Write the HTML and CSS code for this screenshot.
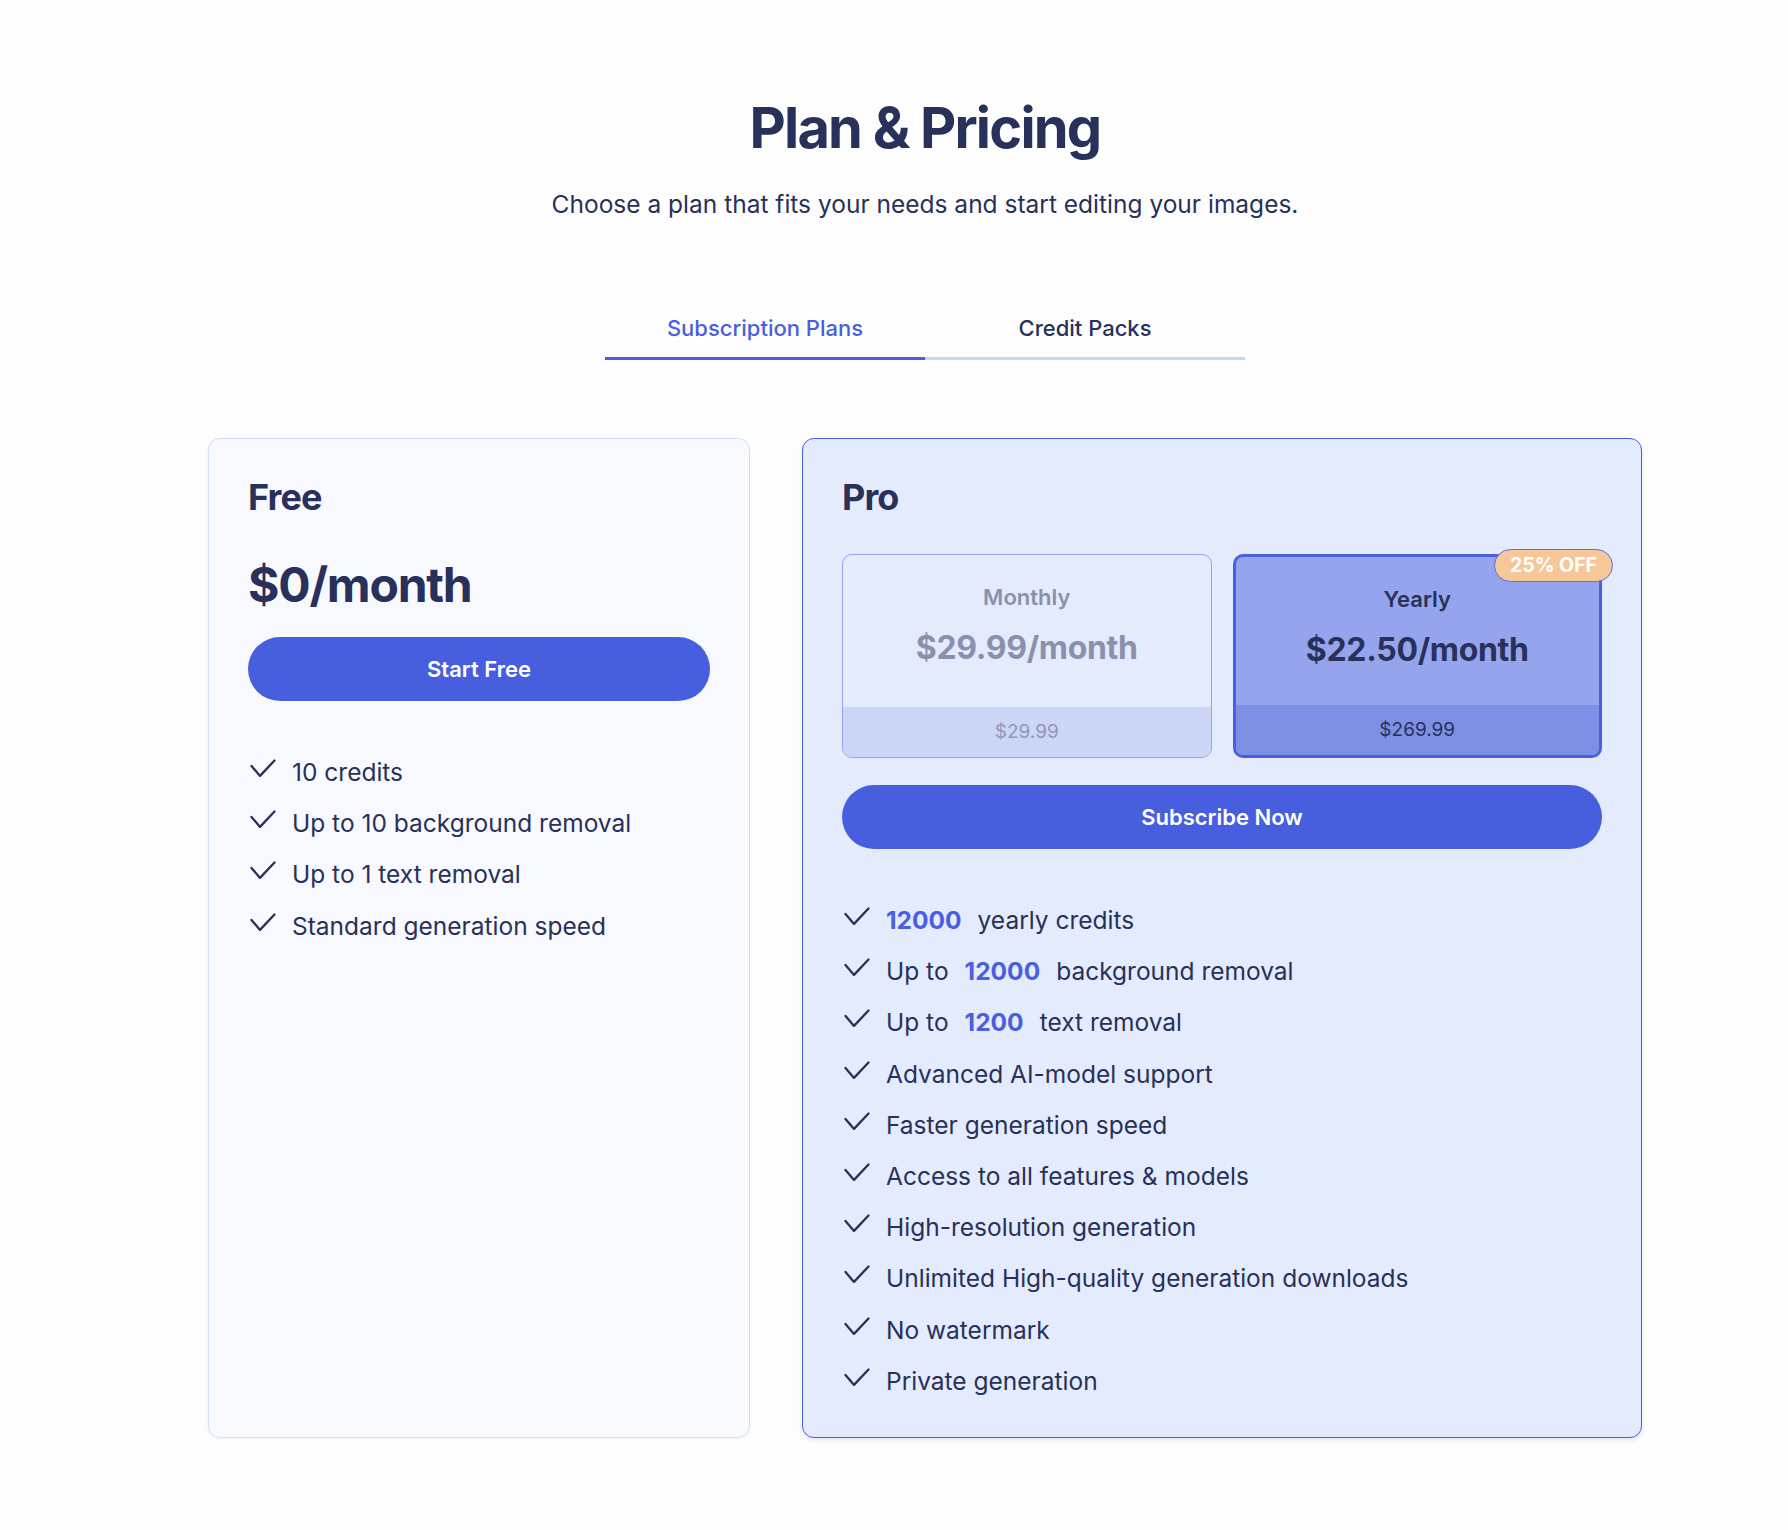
FILE: index.html
```html
<!DOCTYPE html>
<html lang="en">
<head>
<meta charset="utf-8">
<title>Plan &amp; Pricing</title>
<link rel="stylesheet" href="styles.css">
</head>
<body>
<main class="page">
  <h1 class="title">Plan &amp; Pricing</h1>
  <p class="subtitle">Choose a plan that fits your needs and start editing your images.</p>

  <div class="tabs">
    <button class="tab tab-active">Subscription Plans</button>
    <button class="tab">Credit Packs</button>
  </div>

  <div class="plans">
    <section class="card card-free">
      <h2 class="plan-name">Free</h2>
      <div class="plan-price">$0/month</div>
      <button class="cta">Start Free</button>
      <ul class="features">
        <li><svg class="check" viewBox="0 0 26 20"><polyline points="1.5 6.9 10 16.9 24.5 1.5"/></svg><span>10 credits</span></li>
        <li><svg class="check" viewBox="0 0 26 20"><polyline points="1.5 6.9 10 16.9 24.5 1.5"/></svg><span>Up to 10 background removal</span></li>
        <li><svg class="check" viewBox="0 0 26 20"><polyline points="1.5 6.9 10 16.9 24.5 1.5"/></svg><span>Up to 1 text removal</span></li>
        <li><svg class="check" viewBox="0 0 26 20"><polyline points="1.5 6.9 10 16.9 24.5 1.5"/></svg><span>Standard generation speed</span></li>
      </ul>
    </section>

    <section class="card card-pro">
      <h2 class="plan-name">Pro</h2>
      <div class="billing">
        <div class="option">
          <div class="option-main">
            <div class="option-label">Monthly</div>
            <div class="option-price">$29.99/month</div>
          </div>
          <div class="option-total">$29.99</div>
        </div>
        <div class="option option-selected">
          <span class="badge">25% OFF</span>
          <div class="option-main">
            <div class="option-label">Yearly</div>
            <div class="option-price">$22.50/month</div>
          </div>
          <div class="option-total">$269.99</div>
        </div>
      </div>
      <button class="cta">Subscribe Now</button>
      <ul class="features">
        <li><svg class="check" viewBox="0 0 26 20"><polyline points="1.5 6.9 10 16.9 24.5 1.5"/></svg><span class="hl">12000</span><span>yearly credits</span></li>
        <li><svg class="check" viewBox="0 0 26 20"><polyline points="1.5 6.9 10 16.9 24.5 1.5"/></svg><span>Up to</span><span class="hl">12000</span><span>background removal</span></li>
        <li><svg class="check" viewBox="0 0 26 20"><polyline points="1.5 6.9 10 16.9 24.5 1.5"/></svg><span>Up to</span><span class="hl">1200</span><span>text removal</span></li>
        <li><svg class="check" viewBox="0 0 26 20"><polyline points="1.5 6.9 10 16.9 24.5 1.5"/></svg><span>Advanced AI-model support</span></li>
        <li><svg class="check" viewBox="0 0 26 20"><polyline points="1.5 6.9 10 16.9 24.5 1.5"/></svg><span>Faster generation speed</span></li>
        <li><svg class="check" viewBox="0 0 26 20"><polyline points="1.5 6.9 10 16.9 24.5 1.5"/></svg><span>Access to all features &amp; models</span></li>
        <li><svg class="check" viewBox="0 0 26 20"><polyline points="1.5 6.9 10 16.9 24.5 1.5"/></svg><span>High-resolution generation</span></li>
        <li><svg class="check" viewBox="0 0 26 20"><polyline points="1.5 6.9 10 16.9 24.5 1.5"/></svg><span>Unlimited High-quality generation downloads</span></li>
        <li><svg class="check" viewBox="0 0 26 20"><polyline points="1.5 6.9 10 16.9 24.5 1.5"/></svg><span>No watermark</span></li>
        <li><svg class="check" viewBox="0 0 26 20"><polyline points="1.5 6.9 10 16.9 24.5 1.5"/></svg><span>Private generation</span></li>
      </ul>
    </section>
  </div>
</main>
</body>
</html>
```

FILE: styles.css
```css
* {
  box-sizing: border-box;
}

html, body {
  margin: 0;
  padding: 0;
  background: #fdfdfe;
}

body {
  font-family: Inter, "Noto Sans", "Liberation Sans", sans-serif;
  color: #283159;
}

.page {
  padding: 94px 0 90px 62px;
  display: flex;
  flex-direction: column;
  align-items: center;
}

.title {
  margin: 0;
  font-size: 56px;
  line-height: 68px;
  font-weight: 700;
  letter-spacing: -0.032em;
  color: #283159;
}

.subtitle {
  margin: 26px 0 0;
  font-size: 24.5px;
  line-height: 32px;
  font-weight: 400;
  color: #283159;
}

.tabs {
  margin-top: 93px;
  display: flex;
  width: 640px;
}

.tab {
  flex: 1;
  font-family: inherit;
  background: none;
  border: 0;
  border-bottom: 3px solid #c6d6f7;
  padding: 0 0 14px;
  font-size: 22px;
  line-height: 30px;
  font-weight: 500;
  color: #283159;
  cursor: pointer;
}

.tab-active {
  color: #4a5fe0;
  border-bottom-color: #4a5ee0;
}

.plans {
  margin-top: 78px;
  display: grid;
  grid-template-columns: 542px 840px;
  column-gap: 52px;
}

.card {
  border-radius: 12px;
  padding: 36px 39px 40px;
  display: flex;
  flex-direction: column;
}

.card-free {
  background: #f7f9fe;
  border: 1px solid #d3dffa;
  box-shadow: 0 1px 3px rgba(40, 49, 89, 0.05);
}

.card-pro {
  background: #e4ebfd;
  border: 1px solid #4a5fe0;
  box-shadow: 0 2px 4px rgba(40, 49, 89, 0.12);
}

.plan-name {
  margin: 0;
  font-size: 36px;
  line-height: 44px;
  font-weight: 700;
  letter-spacing: -0.025em;
  color: #283159;
}

.plan-price {
  margin-top: 36.5px;
  font-size: 48px;
  line-height: 58px;
  font-weight: 700;
  letter-spacing: -0.025em;
  color: #283159;
}

.cta {
  width: 100%;
  height: 64px;
  border: 0;
  border-radius: 32px;
  background: #475ede;
  color: #ffffff;
  font-family: inherit;
  font-size: 22px;
  font-weight: 600;
  cursor: pointer;
}

.card-free .cta {
  margin-top: 23.5px;
}

.card-pro .cta {
  margin-top: 27px;
}

.features {
  list-style: none;
  margin: 55px 0 0;
  padding: 0;
  display: flex;
  flex-direction: column;
  gap: 19.2px;
}

.features li {
  display: flex;
  align-items: flex-start;
  gap: 16px;
  font-size: 24.5px;
  line-height: 32px;
  color: #283159;
}

.check {
  flex: none;
  width: 26px;
  height: 20px;
  margin: 3px 0 0 2px;
  fill: none;
  stroke: #283159;
  stroke-width: 2.3;
  stroke-linecap: round;
  stroke-linejoin: round;
}

.hl {
  color: #4a5fe0;
  font-weight: 700;
}

.billing {
  margin-top: 35px;
  display: grid;
  grid-template-columns: 1fr 1fr;
  column-gap: 21px;
}

.option {
  position: relative;
  height: 204px;
  display: flex;
  flex-direction: column;
  border: 1px solid #93a3ef;
  border-radius: 10px;
  background: #e4ebfd;
  color: #8a90ae;
  text-align: center;
}

.option-main {
  flex: 1;
  padding-top: 28px;
  border-radius: 9px 9px 0 0;
}

.option-label {
  font-size: 22px;
  line-height: 28px;
  font-weight: 600;
}

.option-price {
  margin-top: 17.3px;
  font-size: 32px;
  line-height: 40px;
  font-weight: 700;
  letter-spacing: -0.01em;
}

.option-total {
  height: 50px;
  line-height: 50px;
  font-size: 19px;
  font-weight: 400;
  background: #cbd6f7;
  color: #9197b5;
  border-radius: 0 0 9px 9px;
}

.option-selected {
  border: 3px solid #4a5ee0;
  background: #95a4ec;
  color: #283159;
}

.option-selected .option-total {
  background: #7e8fe6;
  color: #283159;
  border-radius: 0 0 7px 7px;
}

.badge {
  position: absolute;
  top: -8px;
  right: -14px;
  width: 119px;
  height: 33px;
  line-height: 31px;
  border: 1px solid #5a6fe0;
  border-radius: 17px;
  background: #f5c799;
  color: #ffffff;
  font-size: 19.5px;
  font-weight: 700;
  text-align: center;
}
```
